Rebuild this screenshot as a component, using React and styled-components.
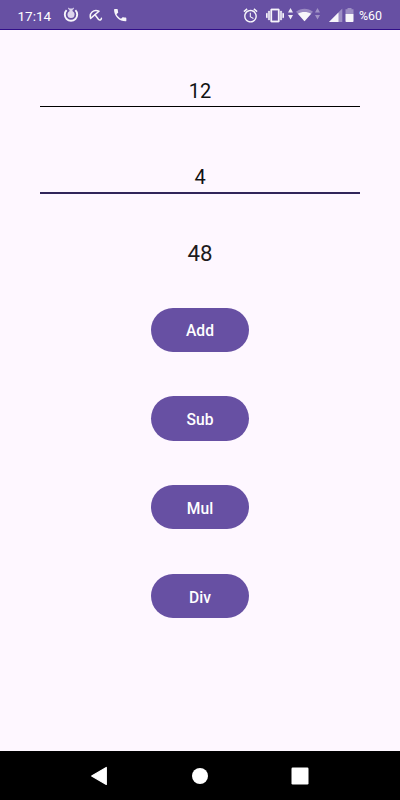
import { useState } from "react";
import styled, { createGlobalStyle } from "styled-components";

const operations = ["Add", "Sub", "Mul", "Div"];

export default function App() {
  const [first, setFirst] = useState("12");
  const [second, setSecond] = useState("4");
  const [result, setResult] = useState("48");

  const calculate = (operation) => {
    const a = Number(first);
    const b = Number(second);
    if (operation === "Add") setResult(String(a + b));
    if (operation === "Sub") setResult(String(a - b));
    if (operation === "Mul") setResult(String(a * b));
    if (operation === "Div") setResult(String(a / b));
  };

  return (
    <Screen>
      <GlobalStyle />
      <StatusBar />
      <Content>
        <NumberInput value={first} onChange={(e) => setFirst(e.target.value)} />
        <NumberInput
          $active
          value={second}
          onChange={(e) => setSecond(e.target.value)}
        />
        <Result>{result}</Result>
        <ButtonList>
          {operations.map((operation) => (
            <Button key={operation} onClick={() => calculate(operation)}>
              {operation}
            </Button>
          ))}
        </ButtonList>
      </Content>
      <NavigationBar />
    </Screen>
  );
}

function StatusBar() {
  return (
    <StatusWrapper>
      <StatusGroup>
        <Time>17:14</Time>
        <StatusIcon width="16" height="16" $left={11.5}>
          <path
            d="M3.6 3.2A6.2 6.2 0 1 0 12.4 3.2"
            fill="none"
            stroke="#fff"
            strokeWidth="1.9"
          />
          <circle cx="8" cy="7.6" r="3.5" fill="#e4ddf2" />
          <path d="M5.2.6l1.5.8h2.6l1.5-.8v1.5L9.5 3v2h-3V3L5.2 2.1z" fill="#e4ddf2" />
        </StatusIcon>
        <StatusIcon width="14" height="14" $left={9.5}>
          <g
            fill="none"
            stroke="#fff"
            strokeWidth="1.5"
            strokeLinecap="round"
            strokeLinejoin="round"
          >
            <path d="M1.6 10.4C0 5.2 4.4 1 10 3.2z" />
            <path d="M6 6.8L9.4 11.2C10.6 12.6 12.2 12 12.4 10.3" />
          </g>
        </StatusIcon>
        <StatusIcon width="16.4" height="16.4" viewBox="0 0 24 24" $left={9.5}>
          <path
            fill="#fff"
            d="M6.62 10.79c1.44 2.83 3.76 5.14 6.59 6.59l2.2-2.2c.27-.27.67-.36 1.02-.24 1.12.37 2.33.57 3.57.57.55 0 1 .45 1 1V20c0 .55-.45 1-1 1-9.39 0-17-7.61-17-17 0-.55.45-1 1-1h3.5c.55 0 1 .45 1 1 0 1.25.2 2.45.57 3.57.11.35.03.74-.25 1.02l-2.2 2.2z"
          />
        </StatusIcon>
      </StatusGroup>
      <StatusGroup>
        <StatusIcon width="17" height="17" viewBox="0 0 24 24">
          <path
            fill="#fff"
            d="M22 5.72l-4.6-3.86-1.29 1.53 4.6 3.86L22 5.72zM7.88 3.39L6.6 1.86 2 5.71l1.29 1.53 4.59-3.85zM12.5 8H11v6l4.75 2.85.75-1.23-4-2.37V8zM12 4c-4.97 0-9 4.03-9 9s4.02 9 9 9c4.97 0 9-4.03 9-9s-4.03-9-9-9zm0 16c-3.87 0-7-3.13-7-7s3.13-7 7-7 7 3.13 7 7-3.13 7-7 7z"
          />
        </StatusIcon>
        <StatusIcon width="18" height="15" viewBox="0 0 24 20" $left={7}>
          <path
            fill="#fff"
            stroke="#fff"
            strokeWidth=".4"
            d="M0 13h2V7H0v6zm3 3h2V4H3v12zm19-9v6h2V7h-2zm-3 9h2V4h-2v12zM16.5 1h-9C6.67 1 6 1.67 6 2.5v15c0 .83.67 1.5 1.5 1.5h9c.83 0 1.5-.67 1.5-1.5v-15c0-.83-.67-1.5-1.5-1.5zM16 17H8V3h8v14z"
          />
        </StatusIcon>
        <DataArrows $left={4} />
        <StatusIcon width="17" height="14" viewBox="0 0 18 14" $left={3}>
          <path d="M0 3.5C5.3-.6 12.7-.6 18 3.5L9 13.7z" fill="#fff" opacity=".35" />
          <path d="M2 5.8C6 3 12 3 16 5.8L9 13.7z" fill="#fff" />
        </StatusIcon>
        <DataArrows $left={1.5} $faded />
        <StatusIcon width="14" height="14" $left={9}>
          <path d="M13.3.5V14H0z" fill="#fff" opacity=".38" />
          <path d="M9.5 4.5V14H0z" fill="#fff" />
        </StatusIcon>
        <StatusIcon width="9" height="14" $left={2.5}>
          <path d="M2.5 0h4v1.3h2V6H.5V1.3h2z" fill="#fff" opacity=".38" />
          <path d="M.5 6h8v7.2q0 .8-.8.8H1.3q-.8 0-.8-.8z" fill="#fff" />
        </StatusIcon>
        <Battery>%60</Battery>
      </StatusGroup>
    </StatusWrapper>
  );
}

function DataArrows(props) {
  return (
    <StatusArrows width="5" height="12" {...props}>
      <path d="M2.5 0L5 4.5H0zM0 7h5l-2.5 4.5z" fill="#fff" />
    </StatusArrows>
  );
}

function NavigationBar() {
  return (
    <NavWrapper>
      <NavButton aria-label="Back">
        <svg width="20" height="20">
          <path
            d="M1.7 10L16.3 1.5v17z"
            fill="#fff"
            stroke="#fff"
            strokeWidth="1.2"
            strokeLinejoin="round"
          />
        </svg>
      </NavButton>
      <NavButton aria-label="Home">
        <svg width="20" height="20">
          <circle cx="10" cy="10" r="8" fill="#fff" />
        </svg>
      </NavButton>
      <NavButton aria-label="Recent apps">
        <svg width="20" height="20">
          <rect x="1.5" y="1.5" width="17" height="17" rx="1.2" fill="#fff" />
        </svg>
      </NavButton>
    </NavWrapper>
  );
}

const GlobalStyle = createGlobalStyle`
  body {
    margin: 0;
    font-family: Roboto, sans-serif;
  }

  * {
    box-sizing: border-box;
  }
`;

const Screen = styled.div`
  width: 400px;
  height: 800px;
  display: flex;
  flex-direction: column;
  background-color: #fef7ff;
  overflow: hidden;
`;

const StatusWrapper = styled.header`
  height: 30px;
  flex-shrink: 0;
  display: flex;
  justify-content: space-between;
  padding: 0 17.5px;
  background-color: #6750a3;
  border-bottom: 1px solid #310e88;
  color: #fff;
`;

const StatusGroup = styled.div`
  display: flex;
  align-items: center;
  padding-top: 1px;
`;

const Time = styled.span`
  width: 34px;
  font-size: 13.5px;
  line-height: 16px;
  padding-top: 1px;
`;

const StatusIcon = styled.svg`
  display: block;
  flex-shrink: 0;
  margin-left: ${(props) => props.$left || 0}px;
  opacity: 0.95;
`;

const StatusArrows = styled(StatusIcon)`
  margin-bottom: 3px;
  opacity: ${(props) => (props.$faded ? 0.38 : 0.9)};
`;

const Battery = styled.span`
  width: 23.5px;
  margin-left: 5px;
  padding-top: 1px;
  font-size: 12.4px;
  line-height: 16px;
`;

const Content = styled.main`
  flex: 1;
  display: flex;
  flex-direction: column;
  align-items: center;
  padding-top: 46px;
`;

const NumberInput = styled.input`
  width: 320px;
  height: ${(props) => (props.$active ? 32 : 31)}px;
  margin-bottom: ${(props) => (props.$active ? 45 : 55)}px;
  padding: 0 0 1px;
  border: none;
  border-bottom: ${(props) =>
    props.$active ? "2px solid #31255a" : "1px solid #000"};
  border-radius: 0;
  outline: none;
  background-color: transparent;
  color: #111;
  font-family: inherit;
  font-size: 20px;
  text-align: center;
`;

const Result = styled.div`
  height: 28px;
  font-size: 22.3px;
  line-height: 28px;
  color: #1d1b20;
`;

const ButtonList = styled.div`
  display: flex;
  flex-direction: column;
  gap: 44.4px;
  margin-top: 40.5px;
`;

const Button = styled.button`
  width: 98px;
  height: 44.4px;
  padding: 3px 0 0;
  border: none;
  border-radius: 23px;
  background-color: #6750a3;
  color: #fff;
  font-family: inherit;
  font-size: 15.6px;
  font-weight: 500;
`;

const NavWrapper = styled.nav`
  height: 49px;
  flex-shrink: 0;
  display: flex;
  align-items: center;
  justify-content: center;
  gap: 80px;
  background-color: #000;
`;

const NavButton = styled.button`
  width: 20px;
  height: 20px;
  padding: 0;
  border: none;
  background: none;

  svg {
    display: block;
  }
`;
